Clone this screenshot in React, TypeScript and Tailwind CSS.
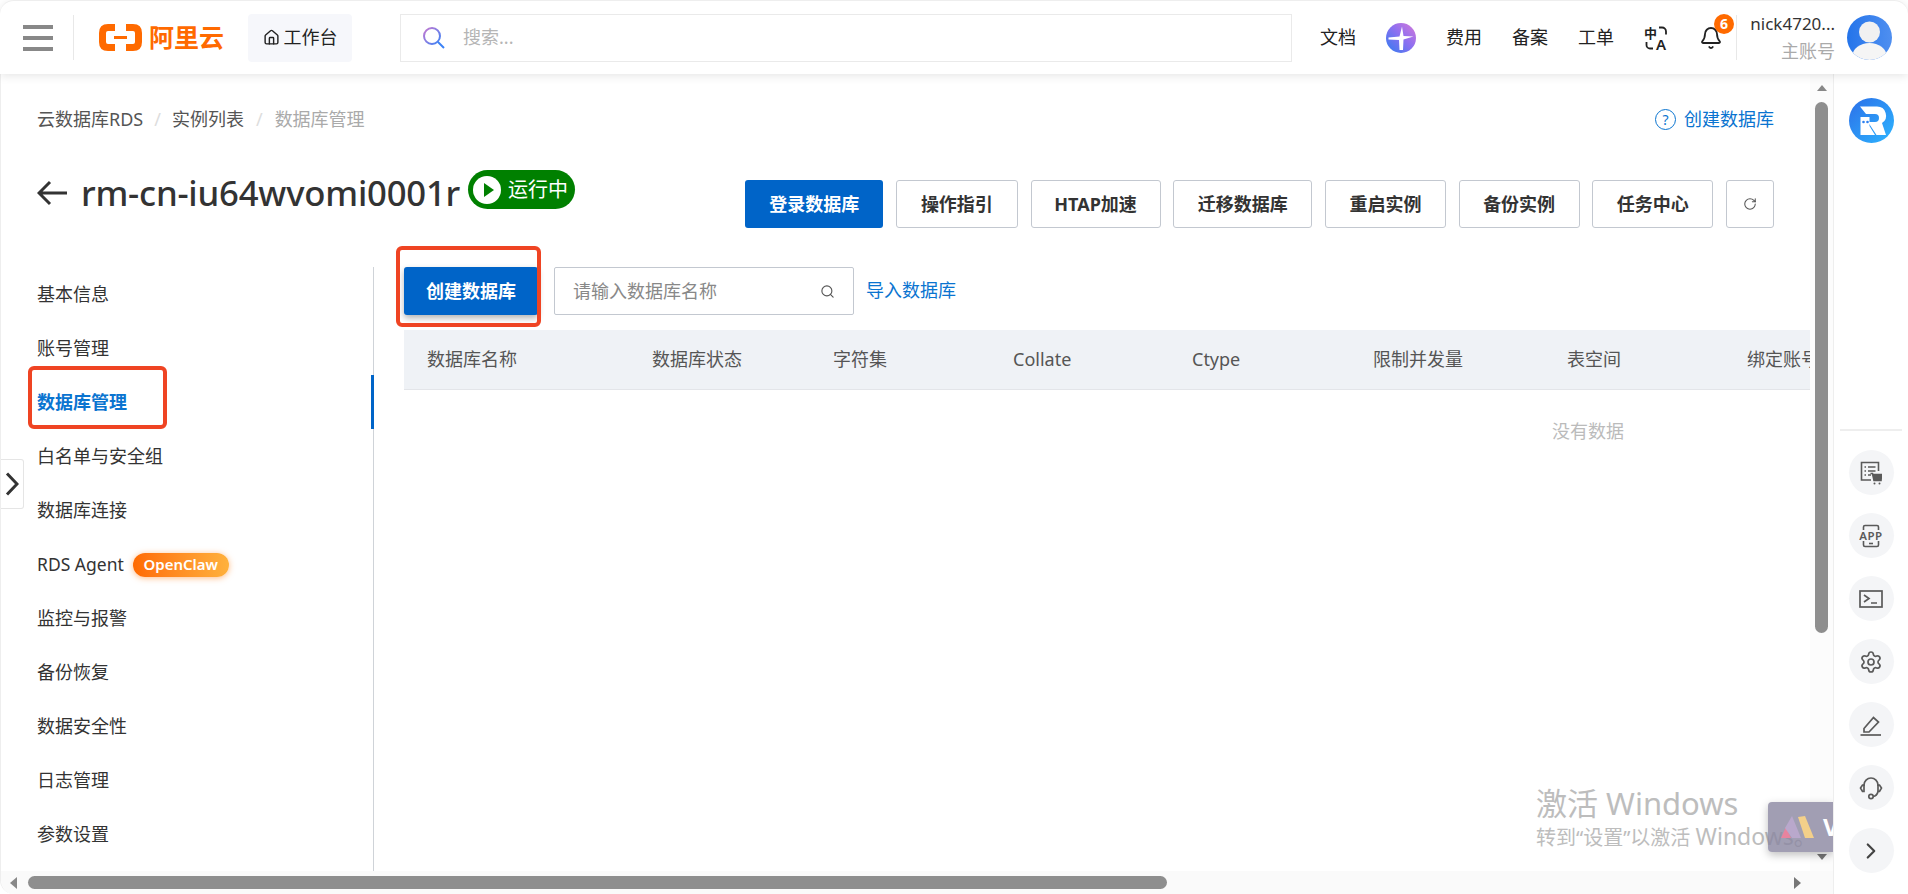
import { Bell, ChevronRight, Home, RotateCw, Search, Settings } from "lucide-react";

const navItems = [
  "基本信息",
  "账号管理",
  "数据库管理",
  "白名单与安全组",
  "数据库连接",
  "RDS Agent",
  "监控与报警",
  "备份恢复",
  "数据安全性",
  "日志管理",
  "参数设置",
];

const actionButtons = [
  { label: "操作指引", width: "w-[122px]" },
  { label: "HTAP加速", width: "w-[130px]" },
  { label: "迁移数据库", width: "w-[139px]" },
  { label: "重启实例", width: "w-[121px]" },
  { label: "备份实例", width: "w-[121px]" },
  { label: "任务中心", width: "w-[121px]" },
];

const columns = [
  { label: "数据库名称", width: "w-[225px]" },
  { label: "数据库状态", width: "w-[181px]" },
  { label: "字符集", width: "w-[180px]" },
  { label: "Collate", width: "w-[179px]" },
  { label: "Ctype", width: "w-[181px]" },
  { label: "限制并发量", width: "w-[194px]" },
  { label: "表空间", width: "w-[180px]" },
  { label: "绑定账号", width: "w-[200px]" },
];

function Logo() {
  return (
    <div className="flex items-center gap-[7px] text-[#ff6a00]">
      <svg width="43" height="27" viewBox="0 0 43 27" fill="none">
        <path d="M16 3.5H9Q3.5 3.5 3.5 9V18Q3.5 23.5 9 23.5H16" stroke="#ff6a00" strokeWidth="7" />
        <path d="M27 3.5H34Q39.5 3.5 39.5 9V18Q39.5 23.5 34 23.5H27" stroke="#ff6a00" strokeWidth="7" />
        <rect x="15" y="12" width="13" height="3" fill="#ff6a00" />
      </svg>
      <span className="text-[25px] leading-none font-bold">阿里云</span>
    </div>
  );
}

function PlusBadge() {
  return (
    <svg width="30" height="30" viewBox="0 0 30 30">
      <defs>
        <linearGradient id="plus-bg" x1="0" y1="1" x2="1" y2="0">
          <stop offset="0" stopColor="#2f7cf0" />
          <stop offset="0.55" stopColor="#8f6ff0" />
          <stop offset="1" stopColor="#d77ad8" />
        </linearGradient>
      </defs>
      <circle cx="15" cy="15" r="15" fill="url(#plus-bg)" />
      <path d="M16 3.500L17.500 13L27.500 13.500L17.500 16.500L17 27H13.500L13 17L2.500 16.500L2.500 14.500L13.500 13.500Z" fill="#fff" />
    </svg>
  );
}

function TranslateIcon() {
  return (
    <svg width="24" height="24" viewBox="0 0 24 24" fill="none" stroke="#222" strokeWidth="1.8">
      <text x="0" y="12" fontSize="13" fontWeight="700" fill="#222" stroke="none">中</text>
      <text x="12" y="23.500" fontSize="15" fontWeight="600" fill="#222" stroke="none">A</text>
      <path d="M15 1.500h3a4 4 0 0 1 4 4v3" />
      <path d="M9 22.500H6a3.500 3.500 0 0 1-3.500-3.500v-3" />
    </svg>
  );
}

function Avatar() {
  return (
    <svg width="45" height="45" viewBox="0 0 45 45">
      <defs>
        <linearGradient id="avatar-bg" x1="0" y1="0" x2="1" y2="0">
          <stop offset="0" stopColor="#2474ea" />
          <stop offset="1" stopColor="#4f8ff0" />
        </linearGradient>
        <clipPath id="avatar-clip">
          <circle cx="22.500" cy="22.500" r="22.500" />
        </clipPath>
      </defs>
      <circle cx="22.500" cy="22.500" r="22.500" fill="url(#avatar-bg)" />
      <g clipPath="url(#avatar-clip)">
        <circle cx="22.500" cy="17" r="10.500" fill="#f1f1f1" />
        <ellipse cx="22.500" cy="41" rx="17" ry="13" fill="#f5f5f5" />
      </g>
    </svg>
  );
}

function RdsLogo() {
  return (
    <svg width="45" height="45" viewBox="0 0 45 45">
      <defs>
        <linearGradient id="rds-bg" x1="0" y1="0" x2="1" y2="1">
          <stop offset="0" stopColor="#2c6fe8" />
          <stop offset="1" stopColor="#2db5ff" />
        </linearGradient>
      </defs>
      <circle cx="22.500" cy="22.500" r="22.500" fill="url(#rds-bg)" />
      <path d="M11 8.500H28a9 9 0 0 1 5 16.500L37 37H27.500L19 24H26a3.500 3.500 0 0 0 0-8H17Z" fill="#fff" />
      <path d="M11.500 19H20.500V28L26 37H11.500Z" fill="#fff" />
      <circle cx="14.500" cy="24" r="1.300" fill="#2c80f0" />
      <circle cx="18.500" cy="24" r="1.300" fill="#2c80f0" />
    </svg>
  );
}

function ToolOrder() {
  return (
    <svg width="22" height="24" viewBox="0 0 22 24" fill="none" stroke="#5a5a5a" strokeWidth="1.600">
      <path d="M11 19H1.500V1.500H18.500V10" />
      <path d="M4.500 6H6M8 6H15.500M4.500 10H6M8 10H15.500M4.500 14H6M8 14H11" />
      <path d="M10.500 12.500H12.500L14 19.500H21L21.500 13.500H13" fill="#5a5a5a" />
      <circle cx="14.500" cy="22.500" r="1" fill="#5a5a5a" stroke="none" />
      <circle cx="19.500" cy="22.500" r="1" fill="#5a5a5a" stroke="none" />
    </svg>
  );
}

function ToolApp() {
  return (
    <svg width="24" height="24" viewBox="0 0 24 24" fill="none" stroke="#5a5a5a" strokeWidth="1.600">
      <path d="M4.500 6V3Q4.500 1.500 6 1.500H18Q19.500 1.500 19.500 3V6" />
      <path d="M4.500 17V21Q4.500 22.500 6 22.500H18Q19.500 22.500 19.500 21V17" />
      <path d="M10 19.500H14" />
      <text x="12" y="15.500" textAnchor="middle" fontSize="11.500" fontWeight="600" letterSpacing="0.500" fill="#5a5a5a" stroke="none">APP</text>
    </svg>
  );
}

function ToolTerminal() {
  return (
    <svg width="24" height="18" viewBox="0 0 24 18" fill="none" stroke="#5a5a5a" strokeWidth="1.700">
      <rect x="1" y="1" width="22" height="16" />
      <path d="M5 5L10 8.500L5 12M12 13H18" />
    </svg>
  );
}

function ToolPencil() {
  return (
    <svg width="22" height="22" viewBox="0 0 22 22" fill="none" stroke="#5a5a5a" strokeWidth="1.700">
      <path d="M4 14.500L13.500 3.500L18.500 8L9 18H4Z" />
      <path d="M0.500 21H21" />
    </svg>
  );
}

function ToolHeadset() {
  return (
    <svg width="24" height="24" viewBox="0 0 24 24" fill="none" stroke="#5a5a5a" strokeWidth="1.700">
      <path d="M5 10V9a7 7 0 0 1 14 0v1" />
      <path d="M5 9H3.500L1.500 12L3.500 15.500H5Z" />
      <path d="M19 9H20.500L22.500 12L20.500 15.500H19Z" />
      <path d="M19 15.500Q18 20 14 20.500" />
      <circle cx="12" cy="20.500" r="2.200" />
    </svg>
  );
}

function ToolButton({ children }: { children: React.ReactNode }) {
  return (
    <div className="flex h-[45px] w-[45px] items-center justify-center rounded-full bg-[#f4f5f7]">
      {children}
    </div>
  );
}

function Header() {
  return (
    <header className="relative z-20 flex h-[74px] shrink-0 items-center rounded-t-[14px] border-t border-[#eeeeee] bg-white pl-[23px] shadow-[0_2px_10px_rgba(0,0,0,0.10)]">
      <div className="flex w-[30px] flex-col gap-[7px]">
        <div className="h-[4px] bg-[#888888]" />
        <div className="h-[4px] bg-[#888888]" />
        <div className="h-[4px] bg-[#888888]" />
      </div>
      <div className="ml-[20px] h-[45px] w-px bg-[#e8e8e8]" />
      <div className="ml-[25px]">
        <Logo />
      </div>
      <div className="ml-[24px] flex h-[48px] w-[104px] items-center justify-center gap-[4px] rounded-[4px] bg-[#f6f7fb] text-[#222222]">
        <Home size={17} strokeWidth={2} />
        <span>工作台</span>
      </div>
      <div className="ml-[48px] flex h-[48px] w-[892px] items-center border border-[#eaeaea] pl-[21px]">
        <svg width="24" height="24" viewBox="0 0 24 24" fill="none" strokeWidth="2">
          <defs>
            <linearGradient id="search-grad" x1="0" y1="0" x2="1" y2="1">
              <stop offset="0" stopColor="#c779d0" />
              <stop offset="1" stopColor="#3b82f6" />
            </linearGradient>
          </defs>
          <circle cx="10" cy="10" r="8" stroke="url(#search-grad)" />
          <path d="M16 16L22 22" stroke="#3b82f6" />
        </svg>
        <span className="ml-[17px] text-[#b5b5b5]">搜索...</span>
      </div>
      <span className="ml-[28px] text-[#222222]">文档</span>
      <div className="ml-[30px] flex">
        <PlusBadge />
      </div>
      <span className="ml-[30px] text-[#222222]">费用</span>
      <span className="ml-[30px] text-[#222222]">备案</span>
      <span className="ml-[30px] text-[#222222]">工单</span>
      <div className="ml-[30px] flex">
        <TranslateIcon />
      </div>
      <div className="relative ml-[31px] flex">
        <Bell size={24} strokeWidth={1.8} color="#222222" />
        <span className="absolute top-[-12px] left-[15px] flex h-[20px] w-[20px] items-center justify-center rounded-full bg-[#ff6a00] text-[14px] font-bold text-white">
          6
        </span>
      </div>
      <div className="ml-[13px] h-[45px] w-px bg-[#e8e8e8]" />
      <div className="ml-[14px] flex w-[84px] flex-col items-end">
        <span className="text-[17px] leading-[26px] text-[#333333]">nick4720...</span>
        <span className="leading-[28px] text-[#aaaaaa]">主账号</span>
      </div>
      <div className="ml-[12px] flex">
        <Avatar />
      </div>
    </header>
  );
}

function Sidebar() {
  return (
    <nav className="h-[604px] w-[373px] shrink-0 border-r border-[#cfd3d8]">
      {navItems.map((item, i) => (
        <div key={item} className="relative flex h-[54.1px] items-center pl-[36px]">
          {i === 2 ? (
            <>
              <span className="font-bold text-[#0a74d0]">{item}</span>
              <div className="absolute top-[-9px] left-[27px] h-[63px] w-[139px] rounded-[6px] border-[4px] border-[#ef4423]" />
              <div className="absolute top-0 right-[-1px] h-[54px] w-[3px] bg-[#0064c8]" />
            </>
          ) : item === "RDS Agent" ? (
            <span className="text-[17.5px] text-[#333333]">{item}</span>
          ) : (
            <span className="text-[#333333]">{item}</span>
          )}
          {item === "RDS Agent" && (
            <span className="ml-[9px] flex h-[24px] w-[96px] items-center justify-center rounded-full bg-gradient-to-r from-[#ff6a00] to-[#ffb13c] text-[15px] font-semibold text-white shadow-[0_1px_6px_rgba(255,130,30,0.55)]">
              OpenClaw
            </span>
          )}
        </div>
      ))}
    </nav>
  );
}

function DatabasePanel() {
  return (
    <section className="ml-[30px] min-w-0 flex-1">
      <div className="flex h-[48px] items-start">
        <div className="relative">
          <button className="h-[48px] w-[134px] rounded-[3px] bg-[#0064c8] font-bold text-white shadow-[0_3px_6px_rgba(0,0,0,0.3)]">
            创建数据库
          </button>
          <div className="absolute top-[-21px] left-[-8px] h-[81px] w-[145px] rounded-[6px] border-[4px] border-[#ef4423]" />
        </div>
        <div className="ml-[16px] flex h-[48px] w-[300px] items-center justify-between rounded-[2px] border border-[#c3c8d0] pr-[18px] pl-[18px]">
          <span className="text-[#888888]">请输入数据库名称</span>
          <Search size={15} strokeWidth={1.8} color="#555555" />
        </div>
        <span className="mt-[10px] ml-[12px] text-[#0a74d0]">导入数据库</span>
      </div>
      <div className="mt-[15px] overflow-hidden">
        <div className="w-[2368px]">
          <div className="flex h-[60px] items-center border-b border-[#e3e5e9] bg-[#eff2f6] text-[#555555]">
            {columns.map((col) => (
              <div key={col.label} className={`${col.width} shrink-0 pl-[23px]`}>
                {col.label}
              </div>
            ))}
          </div>
          <div className="flex h-[82px] items-center justify-center text-[#bbbbbb]">没有数据</div>
        </div>
      </div>
    </section>
  );
}

function MainContent() {
  return (
    <div className="w-[1809px] shrink-0">
      <div className="mt-[25px] flex h-[40px] items-center justify-between pr-[36px] pl-[36px]">
        <div className="flex items-center">
          <span className="text-[#555555]">云数据库RDS</span>
          <span className="mx-[11px] text-[#dddddd]">/</span>
          <span className="text-[#555555]">实例列表</span>
          <span className="mx-[12px] text-[#dddddd]">/</span>
          <span className="text-[#aaaaaa]">数据库管理</span>
        </div>
        <div className="flex items-center gap-[8px] text-[#0a74d0]">
          <span className="flex h-[21px] w-[21px] items-center justify-center rounded-full border border-[#0a74d0] text-[14px]">
            ?
          </span>
          <span>创建数据库</span>
        </div>
      </div>
      <div className="mt-[31px] flex h-[58px] items-start justify-between pr-[36px] pl-[36px]">
        <div className="flex items-start">
          <svg className="mt-[10px]" width="30" height="26" viewBox="0 0 30 26" fill="none" stroke="#333333" strokeWidth="3">
            <path d="M30 13H3M13 2L2 13L13 24" />
          </svg>
          <h1 className="ml-[14px] text-[34.7px] leading-[46px] font-medium tracking-[-0.2px] text-[#333333]">
            rm-cn-iu64wvomi0001r
          </h1>
          <div className="ml-[8px] flex h-[39px] w-[107px] items-center rounded-full bg-[#008000] pl-[5px]">
            <span className="flex h-[28px] w-[28px] items-center justify-center rounded-full bg-white">
              <span className="ml-[3px] h-0 w-0 border-y-[7px] border-l-[10px] border-y-transparent border-l-[#008000]" />
            </span>
            <span className="ml-[7px] text-[20px] text-white">运行中</span>
          </div>
        </div>
        <div className="mt-[10px] flex items-center gap-[12.7px]">
          <button className="h-[48px] w-[138px] rounded-[3px] bg-[#0064c8] font-bold text-white">
            登录数据库
          </button>
          {actionButtons.map((btn) => (
            <button
              key={btn.label}
              className={`${btn.width} h-[48px] rounded-[3px] border border-[#c3c8d0] bg-white font-bold text-[#333333]`}
            >
              {btn.label}
            </button>
          ))}
          <button className="flex h-[48px] w-[48px] items-center justify-center rounded-[3px] border border-[#c3c8d0] bg-white">
            <RotateCw size={14} strokeWidth={1.8} color="#555555" />
          </button>
        </div>
      </div>
      <div className="mt-[39px] flex items-start">
        <Sidebar />
        <DatabasePanel />
      </div>
    </div>
  );
}

function VerticalScrollbar() {
  return (
    <div className="flex w-[23px] shrink-0 flex-col bg-[#fcfcfc] pl-[5px]">
      <div className="mt-[11px] ml-[2px] h-0 w-0 border-x-[5px] border-b-[6px] border-x-transparent border-b-[#888888]" />
      <div className="mt-[11px] h-[531px] w-[13px] rounded-full bg-[#8e8e8e]" />
      <div className="mt-[221px] ml-[2px] h-0 w-0 border-x-[5px] border-t-[6px] border-x-transparent border-t-[#777777]" />
    </div>
  );
}

function HorizontalScrollbar() {
  return (
    <div className="flex h-[23px] shrink-0 items-center rounded-bl-[14px] bg-[#fafafa]">
      <div className="ml-[9px] h-0 w-0 border-y-[6px] border-r-[7px] border-y-transparent border-r-[#888888]" />
      <div className="ml-[11px] h-[13px] w-[1139px] rounded-full bg-[#8e8e8e]" />
      <div className="ml-[627px] h-0 w-0 border-y-[6px] border-l-[7px] border-y-transparent border-l-[#777777]" />
    </div>
  );
}

function ToolRail() {
  return (
    <aside className="flex w-[75px] shrink-0 flex-col items-center rounded-br-[14px] border-l border-[#eeeeee] bg-white">
      <div className="mt-[24px] flex">
        <RdsLogo />
      </div>
      <div className="mt-[286px] h-[2px] w-[62px] bg-[#eeeeee]" />
      <div className="mt-[19px] flex flex-col gap-[18px]">
        <ToolButton><ToolOrder /></ToolButton>
        <ToolButton><ToolApp /></ToolButton>
        <ToolButton><ToolTerminal /></ToolButton>
        <ToolButton><Settings size={24} strokeWidth={1.7} color="#5a5a5a" /></ToolButton>
        <ToolButton><ToolPencil /></ToolButton>
        <ToolButton><ToolHeadset /></ToolButton>
        <ToolButton><ChevronRight size={26} strokeWidth={2} color="#444444" /></ToolButton>
      </div>
    </aside>
  );
}

export default function App() {
  return (
    <div className="flex h-[894px] w-[1908px] flex-col overflow-hidden bg-white font-['Noto_Sans','Noto_Sans_CJK_SC',sans-serif] text-[18px]">
      <Header />
      <div className="flex min-h-0 flex-1">
        <div className="relative flex w-[1833px] shrink-0 flex-col overflow-hidden rounded-bl-[14px] border-l border-[#eeeeee]">
          <div className="flex min-h-0 flex-1">
            <MainContent />
            <VerticalScrollbar />
          </div>
          <HorizontalScrollbar />
          <div className="absolute top-[385px] left-0 flex h-[50px] w-[23px] items-center justify-center rounded-r-[3px] border border-l-0 border-[#e5e5e5] bg-white">
            <svg width="14" height="24" viewBox="0 0 14 24" fill="none" stroke="#333333" strokeWidth="3">
              <path d="M2 1.500L12 12L2 22.500" />
            </svg>
          </div>
          <div className="absolute top-[710px] left-[1535px] whitespace-nowrap text-[#bdbdbd]">
            <div className="text-[31px] leading-[38px]">激活 Windows</div>
            <div className="text-[20px] leading-[28px]">
              转到“设置”以激活 <span className="text-[23px]">Windows。</span>
            </div>
          </div>
          <div className="absolute top-[728px] right-0 flex h-[50px] w-[65px] items-center overflow-hidden rounded-l-[4px] bg-[#8a86a0]/80 pl-[13px] shadow-[0_3px_8px_rgba(0,0,0,0.25)]">
            <svg className="shrink-0" width="34" height="26" viewBox="0 0 34 26">
              <path d="M0 24L5 13L10 24Z" fill="#e8839e" />
              <path d="M4 14L11 2L20 24H11Z" fill="#b9a8cc" />
              <path d="M17 3L24 2L33 24H24Z" fill="#f3d08a" />
            </svg>
            <span className="ml-[8px] text-[24px] font-bold text-white">V</span>
          </div>
        </div>
        <ToolRail />
      </div>
    </div>
  );
}
